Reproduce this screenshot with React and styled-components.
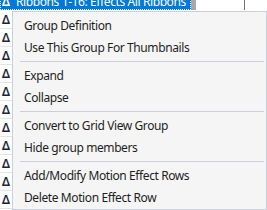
import React from "react";
import styled, { createGlobalStyle } from "styled-components";

const Global = createGlobalStyle`
  html, body { margin: 0; padding: 0; background: #ffffff; overflow: hidden; }
  body { width: 267px; height: 210px; font-family: "Noto Sans", "Open Sans", sans-serif; }
`;

const Page = styled.div`
  position: relative;
  width: 267px;
  height: 210px;
  overflow: hidden;
  background: #ffffff;
`;

const List = styled.div`
  display: flex;
  flex-direction: column;
  margin-top: -7px;
`;

const Row = styled.div`
  display: flex;
  height: 18px;
  box-sizing: border-box;
  border-bottom: 1px solid ${(p) => (p.$selected ? "transparent" : "#e3e3e3")};
  align-items: stretch;
`;

const NameCell = styled.div`
  width: 191px;
  box-sizing: border-box;
  display: flex;
  align-items: flex-end;
  padding: 0 0 1px 2px;
  font-size: 12px;
  line-height: 14px;
  letter-spacing: -0.4px;
  white-space: nowrap;
  overflow: hidden;
  color: ${(p) => (p.$selected ? "#ffffff" : "#1e1e3c")};
  background: ${(p) => (p.$selected ? "#0078d7" : "#ffffff")};
  outline: ${(p) => (p.$selected ? "1px dotted #ffffff" : "none")};
  outline-offset: -1px;
`;

const Delta = styled.span`
  width: 14px;
  flex: none;
  font-weight: 600;
`;

const GrayCell = styled.div`
  width: 5px;
  background: ${(p) => (p.$selected ? "#a8a8a8" : "#ffffff")};
`;

const BlankCell = styled.div`
  width: 48px;
  border-right: 1px solid ${(p) => (p.$selected ? "#767676" : "#e3e3e3")};
`;

const Menu = styled.div`
  position: absolute;
  left: 12px;
  top: 11px;
  width: 255px;
  height: 199px;
  box-sizing: border-box;
  background: #f5f5f5;
  border: 1px solid #cccedb;
  padding: 2px 2px 1px 0;
  display: flex;
  flex-direction: column;
`;

const Item = styled.div`
  height: 22px;
  flex: none;
  display: flex;
  align-items: center;
  padding-left: 11px;
  font-size: 12px;
  letter-spacing: -0.4px;
  color: #1e1e1e;
  white-space: nowrap;
`;

const Separator = styled.div`
  height: 6px;
  flex: none;
  display: flex;
  align-items: center;
  padding-left: 7px;
  &::after {
    content: "";
    flex: 1;
    height: 1px;
    background: #cccedb;
  }
`;

const rows = Array.from({ length: 13 }, (_, i) => i);

const menu = [
  "Group Definition",
  "Use This Group For Thumbnails",
  "-",
  "Expand",
  "Collapse",
  "-",
  "Convert to Grid View Group",
  "Hide group members",
  "-",
  "Add/Modify Motion Effect Rows",
  "Delete Motion Effect Row",
];

export default function App() {
  return (
    <Page>
      <Global />
      <List>
        {rows.map((i) => (
          <Row key={i} $selected={i === 0}>
            <NameCell $selected={i === 0}>
              <Delta>Δ</Delta>
              {i === 0 ? "Ribbons 1-16: Effects All Ribbons" : ""}
            </NameCell>
            <GrayCell $selected={i === 0} />
            <BlankCell $selected={i === 0} />
          </Row>
        ))}
      </List>
      <Menu>
        {menu.map((m, i) =>
          m === "-" ? <Separator key={i} /> : <Item key={i}>{m}</Item>
        )}
      </Menu>
    </Page>
  );
}
